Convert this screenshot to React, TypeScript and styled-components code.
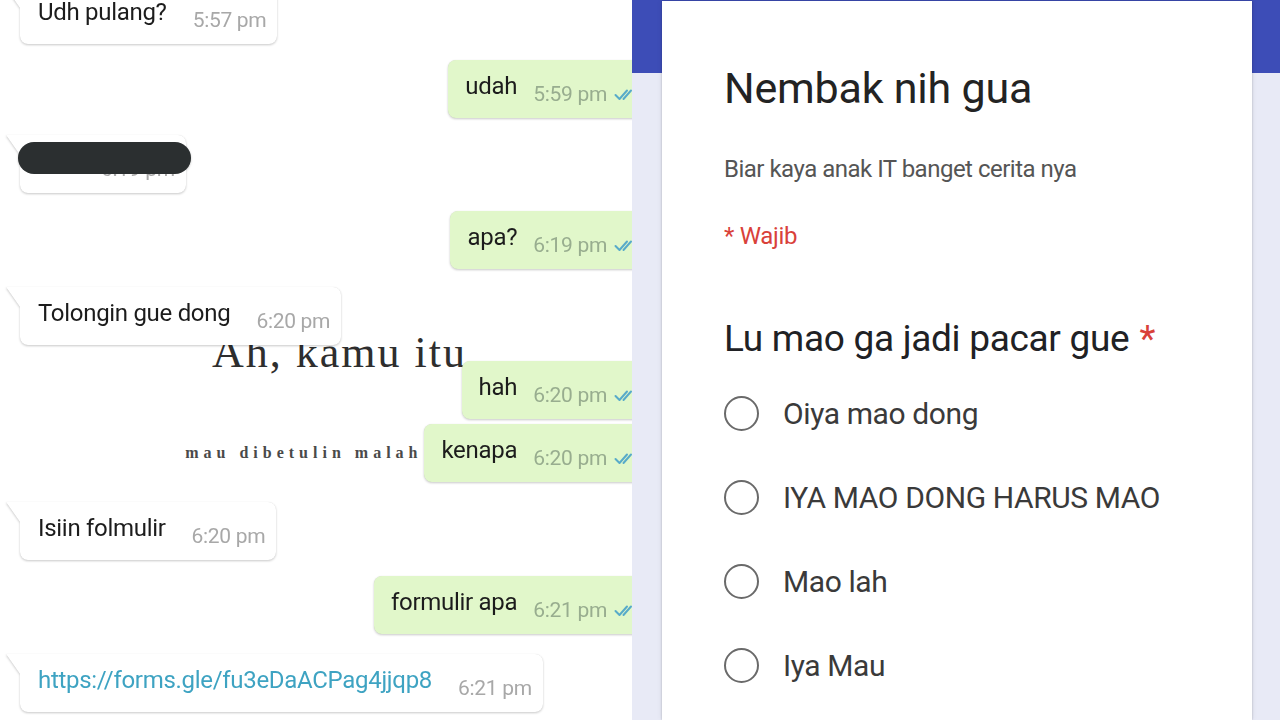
import React from "react";
import styled, { createGlobalStyle } from "styled-components";

const Global = createGlobalStyle`
  html, body { margin: 0; padding: 0; background: #fff; }
  body { font-family: Roboto, "Noto Sans", Arial, sans-serif; -webkit-font-smoothing: antialiased; }
  * { box-sizing: border-box; }
`;

const Page = styled.div`
  width: 1280px;
  height: 720px;
  display: grid;
  grid-template-columns: 632px 1fr;
  overflow: hidden;
`;

/* ---------- chat ---------- */
const Chat = styled.div`
  background: #fff;
  overflow: hidden;
  display: flex;
  flex-direction: column;
  font-family: Roboto, Arial, sans-serif;
`;

const Row = styled.div<{ $mt: number; $out?: boolean }>`
  display: flex;
  align-items: center;
  justify-content: ${(p) => (p.$out ? "flex-end" : "flex-start")};
  margin-top: ${(p) => p.$mt}px;
  padding-left: 20px;
  margin-right: ${(p) => (p.$out ? "-14px" : "0")};
  position: relative;
`;

const Bubble = styled.div<{ $out?: boolean; $h?: number }>`
  position: relative;
  z-index: 2;
  display: flex;
  align-items: flex-end;
  height: ${(p) => p.$h ?? 58}px;
  padding: 0 ${(p) => (p.$out ? "10px" : "11px")} 12px ${(p) => (p.$out ? "17px" : "18px")};
  background: ${(p) => (p.$out ? "#e1f7ca" : "#ffffff")};
  border-radius: ${(p) => (p.$out ? "8px" : "0 8px 8px 8px")};
  filter: drop-shadow(0 1px 1px rgba(0, 0, 0, 0.2)) drop-shadow(0 0 0.5px rgba(0, 0, 0, 0.12));

  &::before {
    content: "";
    display: ${(p) => (p.$out ? "none" : "block")};
    position: absolute;
    left: -14px;
    top: 0;
    width: 14px;
    height: 20px;
    background: #fff;
    clip-path: polygon(0 0, 100% 0, 100% 100%);
  }
`;

const MsgText = styled.span<{ $link?: boolean }>`
  font-size: 24px;
  line-height: 28px;
  color: ${(p) => (p.$link ? "#3ea3c2" : "#1c1c1c")};
  letter-spacing: -0.3px;
  padding-bottom: 6px;
  white-space: nowrap;
`;

const Spacer = styled.span<{ $w: number }>`
  width: ${(p) => p.$w}px;
  flex: none;
`;

const Time = styled.span<{ $out?: boolean }>`
  font-size: 21px;
  line-height: 24px;
  color: ${(p) => (p.$out ? "#98ad8f" : "#a8a8a8")};
  margin-left: ${(p) => (p.$out ? "16px" : "26px")};
  letter-spacing: -0.3px;
  white-space: nowrap;
`;

const Ticks = styled.svg`
  width: 22px;
  height: 13px;
  margin-left: 7px;
  margin-bottom: 5px;
  flex: none;
`;

const Redact = styled.div`
  position: absolute;
  left: -2px;
  top: 7px;
  width: 173px;
  height: 32px;
  border-radius: 16px;
  background: #2b2f30;
`;

const OverlayTitle = styled.div<{ $mt: number }>`
  position: relative;
  z-index: 1;
  margin-top: ${(p) => p.$mt}px;
  margin-left: 212px;
  height: 44px;
  font-family: "Liberation Serif", "DejaVu Serif", serif;
  font-size: 44px;
  line-height: 44px;
  letter-spacing: 2px;
  color: #2e2e2e;
  white-space: nowrap;
`;

const SideNote = styled.span`
  font-family: "Liberation Serif", "DejaVu Serif", serif;
  font-weight: 700;
  font-size: 16px;
  letter-spacing: 5px;
  color: #4a4a4a;
  margin-right: 2px;
  white-space: nowrap;
`;

const DoubleTick = () => (
  <Ticks viewBox="0 0 22 13" fill="none" stroke="#58abc9" strokeWidth="2" strokeLinecap="round" strokeLinejoin="round">
    <path d="M1.5 7 L5.5 11 L13 2.5" />
    <path d="M9.5 11 L17 2.5" />
  </Ticks>
);

/* ---------- form ---------- */
const FormSide = styled.div`
  background: linear-gradient(#3d4db7 0 73px, #e8eaf6 73px);
  padding: 0 28px 0 30px;
  display: flex;
`;

const Card = styled.div`
  flex: 1;
  background: #fff;
  margin-top: 1px;
  box-shadow: 0 0 2px rgba(0, 0, 0, 0.22), 0 0 6px rgba(0, 0, 0, 0.08);
  padding: 63px 20px 0 62px;
  display: flex;
  flex-direction: column;
  font-family: Roboto, Arial, sans-serif;
`;

const Title = styled.h1`
  margin: 0;
  font-weight: 400;
  font-size: 43px;
  line-height: 48px;
  color: #232323;
  letter-spacing: -0.2px;
  white-space: nowrap;
`;

const Desc = styled.p`
  margin: 42px 0 0;
  font-size: 24px;
  line-height: 30px;
  color: #555555;
  letter-spacing: -0.5px;
  white-space: nowrap;
`;

const Required = styled.p`
  margin: 37px 0 0;
  font-size: 24px;
  line-height: 30px;
  color: #d9413a;
  letter-spacing: -0.3px;
`;

const Question = styled.h2`
  margin: 66px 0 0;
  font-weight: 400;
  font-size: 37px;
  line-height: 44px;
  color: #202124;
  letter-spacing: -0.3px;
  white-space: nowrap;

  span {
    color: #d9413a;
    margin-left: 10px;
  }
`;

const Options = styled.div`
  margin-top: 35px;
  display: flex;
  flex-direction: column;
  gap: 50px;
`;

const Option = styled.label`
  display: flex;
  align-items: center;
  gap: 24px;
  height: 34px;
  font-size: 30px;
  color: #3a3a3a;
  letter-spacing: -0.4px;
  white-space: nowrap;
`;

const Radio = styled.span`
  width: 35px;
  height: 35px;
  border-radius: 50%;
  border: 2.6px solid #6a6a6a;
  flex: none;
`;

export default function App() {
  return (
    <>
      <Global />
      <Page>
        <Chat>
          <Row $mt={-12}>
            <Bubble $h={56}>
              <MsgText>Udh pulang?</MsgText>
              <Time>5:57 pm</Time>
            </Bubble>
          </Row>
          <Row $mt={16} $out>
            <Bubble $out>
              <MsgText>udah</MsgText>
              <Time $out>5:59 pm</Time>
              <DoubleTick />
            </Bubble>
          </Row>
          <Row $mt={17}>
            <Bubble>
              <Spacer $w={37} />
              <Time>6:19 pm</Time>
              <Redact />
            </Bubble>
          </Row>
          <Row $mt={18} $out>
            <Bubble $out>
              <MsgText>apa?</MsgText>
              <Time $out>6:19 pm</Time>
              <DoubleTick />
            </Bubble>
          </Row>
          <Row $mt={18}>
            <Bubble>
              <MsgText>Tolongin gue dong</MsgText>
              <Time>6:20 pm</Time>
            </Bubble>
          </Row>
          <OverlayTitle $mt={-14}>Ah, kamu itu</OverlayTitle>
          <Row $mt={-14} $out>
            <Bubble $out>
              <MsgText>hah</MsgText>
              <Time $out>6:20 pm</Time>
              <DoubleTick />
            </Bubble>
          </Row>
          <Row $mt={5} $out>
            <SideNote>mau dibetulin malah</SideNote>
            <Bubble $out>
              <MsgText>kenapa</MsgText>
              <Time $out>6:20 pm</Time>
              <DoubleTick />
            </Bubble>
          </Row>
          <Row $mt={20}>
            <Bubble>
              <MsgText>Isiin folmulir</MsgText>
              <Time>6:20 pm</Time>
            </Bubble>
          </Row>
          <Row $mt={16} $out>
            <Bubble $out>
              <MsgText>formulir apa</MsgText>
              <Time $out>6:21 pm</Time>
              <DoubleTick />
            </Bubble>
          </Row>
          <Row $mt={20}>
            <Bubble>
              <MsgText $link>https://forms.gle/fu3eDaACPag4jjqp8</MsgText>
              <Time>6:21 pm</Time>
            </Bubble>
          </Row>
        </Chat>
        <FormSide>
          <Card>
            <Title>Nembak nih gua</Title>
            <Desc>Biar kaya anak IT banget cerita nya</Desc>
            <Required>* Wajib</Required>
            <Question>
              Lu mao ga jadi pacar gue<span>*</span>
            </Question>
            <Options>
              {["Oiya mao dong", "IYA MAO DONG HARUS MAO", "Mao lah", "Iya Mau"].map((o) => (
                <Option key={o}>
                  <Radio />
                  {o}
                </Option>
              ))}
            </Options>
          </Card>
        </FormSide>
      </Page>
    </>
  );
}
